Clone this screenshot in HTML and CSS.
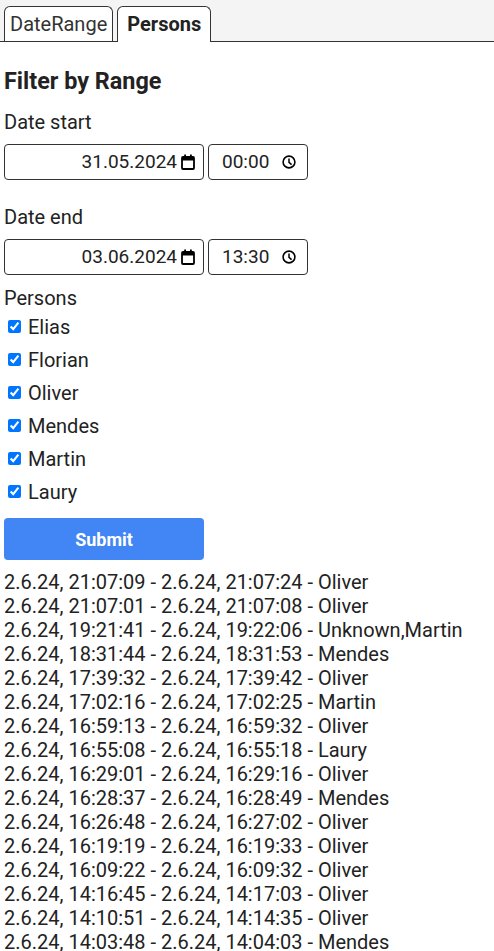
FILE: index.html
```html
<!DOCTYPE html>
<html>
<head>
<meta charset="utf-8">
<link rel="stylesheet" href="styles.css">
</head>
<body>
<div class="tabbar">
  <div class="tab">DateRange</div>
  <div class="tab active">Persons</div>
</div>
<div class="content">
  <h3 class="title">Filter by Range</h3>
  <div class="label first">Date start</div>
  <div class="inputs">
    <div class="field date"><span class="val">31.05.2024</span>
      <svg class="ico" width="14" height="16" viewBox="0 0 14 16"><rect x="1" y="3" width="12" height="12" rx="1" fill="none" stroke="#000" stroke-width="1.8"/><rect x="1" y="3" width="12" height="3.5" fill="#000"/><rect x="3.2" y="0.5" width="1.8" height="3" fill="#000"/><rect x="9" y="0.5" width="1.8" height="3" fill="#000"/></svg>
    </div>
    <div class="field time"><span class="val">00:00</span>
      <svg class="ico" width="14" height="14" viewBox="0 0 14 14"><circle cx="7" cy="7" r="5.9" fill="none" stroke="#000" stroke-width="1.6"/><path d="M7 3.6V7.3L9.6 9.6" fill="none" stroke="#000" stroke-width="1.5"/></svg>
    </div>
  </div>
  <div class="label second">Date end</div>
  <div class="inputs">
    <div class="field date"><span class="val">03.06.2024</span>
      <svg class="ico" width="14" height="16" viewBox="0 0 14 16"><rect x="1" y="3" width="12" height="12" rx="1" fill="none" stroke="#000" stroke-width="1.8"/><rect x="1" y="3" width="12" height="3.5" fill="#000"/><rect x="3.2" y="0.5" width="1.8" height="3" fill="#000"/><rect x="9" y="0.5" width="1.8" height="3" fill="#000"/></svg>
    </div>
    <div class="field time"><span class="val">13:30</span>
      <svg class="ico" width="14" height="14" viewBox="0 0 14 14"><circle cx="7" cy="7" r="5.9" fill="none" stroke="#000" stroke-width="1.6"/><path d="M7 3.6V7.3L9.6 9.6" fill="none" stroke="#000" stroke-width="1.5"/></svg>
    </div>
  </div>
  <div class="label third">Persons</div>
  <div class="persons">
    <label class="person"><input type="checkbox" checked> Elias</label>
    <label class="person"><input type="checkbox" checked> Florian</label>
    <label class="person"><input type="checkbox" checked> Oliver</label>
    <label class="person"><input type="checkbox" checked> Mendes</label>
    <label class="person"><input type="checkbox" checked> Martin</label>
    <label class="person"><input type="checkbox" checked> Laury</label>
  </div>
  <button class="submit">Submit</button>
  <div class="results">
    <div>2.6.24, 21:07:09 - 2.6.24, 21:07:24 - Oliver</div>
    <div>2.6.24, 21:07:01 - 2.6.24, 21:07:08 - Oliver</div>
    <div>2.6.24, 19:21:41 - 2.6.24, 19:22:06 - Unknown,Martin</div>
    <div>2.6.24, 18:31:44 - 2.6.24, 18:31:53 - Mendes</div>
    <div>2.6.24, 17:39:32 - 2.6.24, 17:39:42 - Oliver</div>
    <div>2.6.24, 17:02:16 - 2.6.24, 17:02:25 - Martin</div>
    <div>2.6.24, 16:59:13 - 2.6.24, 16:59:32 - Oliver</div>
    <div>2.6.24, 16:55:08 - 2.6.24, 16:55:18 - Laury</div>
    <div>2.6.24, 16:29:01 - 2.6.24, 16:29:16 - Oliver</div>
    <div>2.6.24, 16:28:37 - 2.6.24, 16:28:49 - Mendes</div>
    <div>2.6.24, 16:26:48 - 2.6.24, 16:27:02 - Oliver</div>
    <div>2.6.24, 16:19:19 - 2.6.24, 16:19:33 - Oliver</div>
    <div>2.6.24, 16:09:22 - 2.6.24, 16:09:32 - Oliver</div>
    <div>2.6.24, 14:16:45 - 2.6.24, 14:17:03 - Oliver</div>
    <div>2.6.24, 14:10:51 - 2.6.24, 14:14:35 - Oliver</div>
    <div>2.6.24, 14:03:48 - 2.6.24, 14:04:03 - Mendes</div>
  </div>
</div>
</body>
</html>
```
FILE: styles.css
```css
html, body {
  margin: 0;
  padding: 0;
  background: #fff;
}
body {
  font-family: Roboto, "Liberation Sans", sans-serif;
  font-size: 20px;
  line-height: 24px;
  color: #222;
  overflow: hidden;
  height: 951px;
}
.tabbar {
  display: flex;
  gap: 4px;
  padding: 6px 4px 0;
  height: 35px;
  background: #f4f4f4;
  border-bottom: 1px solid #333;
}
.tab {
  height: 34px;
  line-height: 35px;
  padding: 0 5px;
  border: 1px solid #333;
  border-bottom: none;
  border-radius: 6px 6px 0 0;
  background: #fff;
  color: #333;
}
.tab.active {
  font-weight: bold;
  height: 35px;
  margin-bottom: -1px;
  padding: 0 9px;
  color: #222;
}
.content {
  padding: 0 4px;
}
.title {
  margin: 27px 0 0;
  font-size: 23.4px;
  line-height: 24px;
  font-weight: bold;
}
.label.first {
  margin-top: 17px;
}
.label.second {
  margin-top: 25px;
}
.label.third {
  margin-top: 11px;
}
.inputs {
  display: flex;
  gap: 4px;
  margin-top: 10px;
}
.field {
  box-sizing: border-box;
  height: 36px;
  border: 1px solid #333;
  border-radius: 4px;
  display: flex;
  align-items: center;
  justify-content: flex-end;
  color: #222;
  font-size: 19px;
}
.field.date {
  width: 200px;
  padding-right: 8px;
}
.field.time {
  width: 100px;
  justify-content: flex-start;
  padding-left: 13px;
}
.field.date .ico {
  margin-left: 4px;
}
.field.time .ico {
  margin-left: auto;
  margin-right: 11px;
}
.person {
  display: flex;
  align-items: center;
  height: 33px;
}
.person input {
  margin: 0 7px 0 4px;
  width: 13px;
  height: 13px;
}
.submit {
  display: block;
  margin-top: 10px;
  width: 200px;
  height: 42px;
  border: none;
  border-radius: 4px;
  background: #4285f4;
  color: #fff;
  font-family: Roboto, "Liberation Sans", sans-serif;
  font-size: 18px;
  font-weight: bold;
}
.results {
  margin-top: 10px;
}
```
